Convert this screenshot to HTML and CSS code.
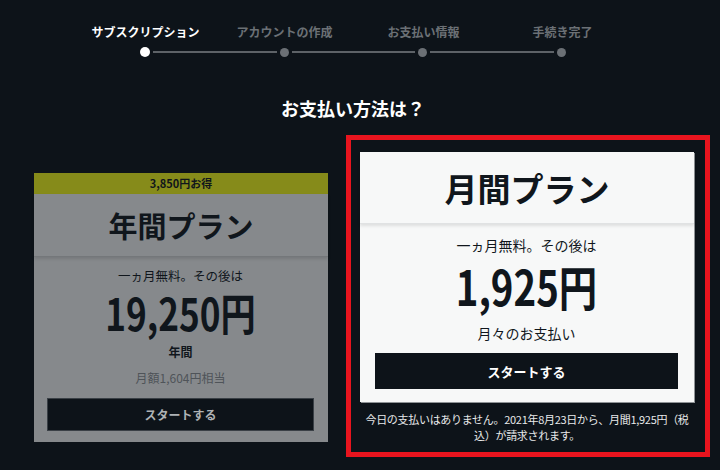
FILE: index.html
```html
<!DOCTYPE html>
<html lang="ja">
<head>
<meta charset="utf-8">
<title>お支払い方法</title>
<link rel="stylesheet" href="styles.css">
</head>
<body>
<div class="page">
  <div class="stepper">
    <div class="labels">
      <span class="label active">サブスクリプション</span>
      <span class="label">アカウントの作成</span>
      <span class="label">お支払い情報</span>
      <span class="label">手続き完了</span>
    </div>
    <div class="track">
      <span class="dot active"></span><span class="line"></span>
      <span class="dot"></span><span class="line"></span>
      <span class="dot"></span><span class="line"></span>
      <span class="dot"></span>
    </div>
  </div>

  <h1 class="title">お支払い方法は？</h1>

  <div class="plans">
    <div class="card card-year">
      <div class="band">3,850円お得</div>
      <div class="card-head">年間プラン</div>
      <div class="card-body">
        <div class="sub">一ヵ月無料。その後は</div>
        <div class="price">19,250円</div>
        <div class="period">年間</div>
        <div class="equiv">月額1,604円相当</div>
        <button class="start">スタートする</button>
      </div>
    </div>

    <div class="selected">
      <div class="card card-month">
        <div class="card-head">月間プラン</div>
        <div class="card-body">
          <div class="sub">一ヵ月無料。その後は</div>
          <div class="price">1,925円</div>
          <div class="period">月々のお支払い</div>
          <button class="start">スタートする</button>
        </div>
      </div>
      <p class="note">今日の支払いはありません。2021年8月23日から、月間1,925円（税<br>込）が請求されます。</p>
    </div>
  </div>
</div>
</body>
</html>
```

FILE: styles.css
```css
* { box-sizing: border-box; }

html, body {
  margin: 0;
  padding: 0;
  background: #0d1319;
}

body {
  font-family: "Noto Sans CJK JP", "Noto Sans", sans-serif;
  color: #ffffff;
}

.page {
  width: 720px;
  height: 470px;
  overflow: hidden;
}

/* stepper */
.stepper {
  margin-left: 76px;
  width: 556px;
  padding-top: 24px;
}

.labels {
  display: grid;
  grid-template-columns: repeat(4, 139px);
}

.label {
  text-align: center;
  font-size: 12px;
  line-height: 16px;
  font-weight: 700;
  color: #6b7075;
  white-space: nowrap;
}

.label.active { color: #ffffff; }

.track {
  display: flex;
  align-items: center;
  margin-top: 7px;
  margin-left: 64px;
  width: 426px;
  height: 10px;
}

.dot {
  width: 9px;
  height: 9px;
  border-radius: 50%;
  background: #6b7075;
  flex: none;
}

.dot.active {
  width: 10px;
  height: 10px;
  background: #ffffff;
}

.line {
  flex: 1;
  height: 2px;
  margin: 0 3px;
  background: #5d6267;
}

/* title */
.title {
  margin: 39px 0 0;
  padding-right: 14px;
  text-align: center;
  font-size: 18px;
  line-height: 24px;
  font-weight: 700;
  color: #ffffff;
}

/* plans */
.plans {
  display: flex;
  align-items: flex-start;
  gap: 18px;
  margin-top: 15px;
  margin-left: 34px;
}

.card {
  color: #10161c;
  text-align: center;
}

.card-head {
  font-weight: 700;
}

.card-body {
  display: flex;
  flex-direction: column;
  align-items: stretch;
}

.price {
  font-weight: 700;
  transform: scaleX(0.8);
}

.start {
  font-family: inherit;
  font-weight: 700;
  border: 0;
  cursor: pointer;
}

/* yearly (dimmed) */
.card-year {
  width: 294px;
  margin-top: 38px;
  background: #86898c;
}

.band {
  height: 21px;
  line-height: 21px;
  font-size: 11px;
  font-weight: 700;
  background: #868b1a;
  color: #10161c;
}

.card-year .card-head {
  height: 63px;
  line-height: 63px;
  font-size: 29px;
  border-bottom: 1px solid #74777a;
  box-shadow: 0 2px 3px rgba(0, 0, 0, 0.12);
}

.card-year .card-body {
  padding: 10px 14px 11px 13px;
}

.card-year .sub {
  font-size: 12.5px;
  line-height: 18px;
}

.card-year .price {
  margin-top: 1px;
  font-size: 44px;
  line-height: 52px;
}

.card-year .period {
  margin-top: 5px;
  font-size: 12px;
  line-height: 18px;
  font-weight: 700;
}

.card-year .equiv {
  margin-top: 8px;
  font-size: 12px;
  line-height: 18px;
  color: #4f5459;
}

.card-year .start {
  margin-top: 11px;
  height: 33px;
  background: #0d1319;
  border: 1px solid #3a4046;
  color: #aeb2b5;
  font-size: 12px;
}

/* selected monthly */
.selected {
  width: 364px;
  border: 5px solid #e8141e;
  padding: 12px 11px 9px 9px;
}

.card-month {
  width: 334px;
  background: #f7f8f8;
  box-shadow: 1px 1px 0 #8f9396;
}

.card-month .card-head {
  height: 72px;
  line-height: 72px;
  font-size: 33px;
  border-bottom: 1px solid #e0e2e3;
  box-shadow: 0 2px 3px rgba(0, 0, 0, 0.1);
}

.card-month .card-body {
  padding: 11px 16px 13px 15px;
}

.card-month .sub {
  font-size: 14px;
  line-height: 20px;
}

.card-month .price {
  margin-top: 2px;
  font-size: 48px;
  line-height: 56px;
}

.card-month .period {
  margin-top: 10px;
  font-size: 14px;
  line-height: 20px;
}

.card-month .start {
  margin-top: 10px;
  height: 36px;
  background: #0d1319;
  color: #ffffff;
  font-size: 13px;
}

.note {
  margin: 9px 0 0;
  text-align: center;
  font-size: 11px;
  line-height: 16px;
  letter-spacing: -0.3px;
  color: #e8e9ea;
}
```
